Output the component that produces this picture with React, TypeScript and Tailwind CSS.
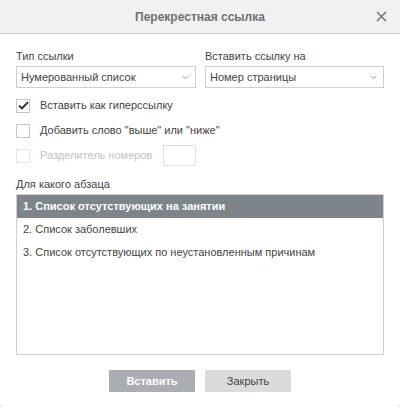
import React from 'react';

const font = { fontFamily: '"Liberation Sans", Arial, sans-serif' };

function Chevron() {
  return (
    <svg width="7" height="5" viewBox="0 0 7 5" className="shrink-0">
      <path d="M0.5 0.8 L3.5 3.8 L6.5 0.8" fill="none" stroke="#8a8a8a" strokeWidth="0.9" />
    </svg>
  );
}

function Select({ value }: { value: string }) {
  return (
    <div className="h-[22px] border border-[#cfcfcf] bg-white flex items-center justify-between pl-[4px] pr-[6px] text-[11px] text-[#444]">
      <span>{value}</span>
      <Chevron />
    </div>
  );
}

function Check({ checked, disabled, label }: { checked?: boolean; disabled?: boolean; label: string }) {
  return (
    <div className="flex items-center h-[13px]">
      <div
        className={`w-[14px] h-[14px] border bg-white flex items-center justify-center ${
          disabled ? 'border-[#e4e4e4]' : 'border-[#c6c6c6]'
        }`}
      >
        {checked && (
          <svg width="11" height="9" viewBox="0 0 11 9">
            <path d="M1 4.6 L4 7.4 L10 1.2" fill="none" stroke="#2a2a2a" strokeWidth="1.9" />
          </svg>
        )}
      </div>
      <span className={`ml-[10px] text-[11px] ${disabled ? 'text-[#c2c2c2]' : 'text-[#444]'}`}>{label}</span>
    </div>
  );
}

export default function App() {
  const rows = [
    '1. Список отсутствующих на занятии',
    '2. Список заболевших',
    '3. Список отсутствующих по неустановленным причинам',
  ];

  return (
    <div className="w-[400px] h-[407px] bg-[#e8e8e8]" style={font}>
      <div className="w-full h-full bg-white rounded-[5px] overflow-hidden flex flex-col">
        {/* header */}
        <div className="h-[34px] shrink-0 bg-[#f1f1f1] border-b border-[#cbcbcb] relative flex items-center justify-center">
          <span className="text-[12px] font-bold text-[#707070]">Перекрестная ссылка</span>
          <svg className="absolute right-[13px] top-[11px]" width="11" height="11" viewBox="0 0 11 11">
            <path d="M1 1 L10 10 M10 1 L1 10" stroke="#777" strokeWidth="1.6" />
          </svg>
        </div>

        <div className="px-[16px] pt-[16px] flex flex-col">
          {/* selects */}
          <div className="grid grid-cols-[180px_179px] gap-x-[9px]">
            <div className="flex flex-col">
              <span className="text-[11px] text-[#444] leading-[13px] mb-[3px]">Тип ссылки</span>
              <Select value="Нумерованный список" />
            </div>
            <div className="flex flex-col">
              <span className="text-[11px] text-[#444] leading-[13px] mb-[3px]">Вставить ссылку на</span>
              <Select value="Номер страницы" />
            </div>
          </div>

          {/* checkboxes */}
          <div className="mt-[11px] flex flex-col gap-[12px]">
            <Check checked label="Вставить как гиперссылку" />
            <Check label={'Добавить слово "выше" или "ниже"'} />
            <div className="flex items-center h-[13px]">
              <Check disabled label="Разделитель номеров" />
              <div className="ml-[11px] w-[33px] h-[21px] shrink-0 border border-[#e0e0e0] bg-white" />
            </div>
          </div>

          {/* list */}
          <span className="mt-[16px] text-[11px] text-[#444] leading-[13px]">Для какого абзаца</span>
          <div className="mt-[3px] h-[161px] border border-[#cfcfcf] bg-white flex flex-col">
            {rows.map((r, i) => (
              <div
                key={r}
                className={`h-[23px] flex items-center px-[6px] text-[11px] ${
                  i === 0 ? 'bg-[#7d858b] text-white font-bold' : 'text-[#444]'
                }`}
              >
                {r}
              </div>
            ))}
          </div>

          {/* buttons */}
          <div className="mt-[15px] flex justify-center gap-[10px]">
            <button className="w-[86px] h-[22px] bg-[#aaaeb2] text-white font-bold text-[11px]">Вставить</button>
            <button className="w-[86px] h-[22px] bg-[#dadbdc] text-[#444] text-[11px]">Закрыть</button>
          </div>
        </div>
      </div>
    </div>
  );
}
